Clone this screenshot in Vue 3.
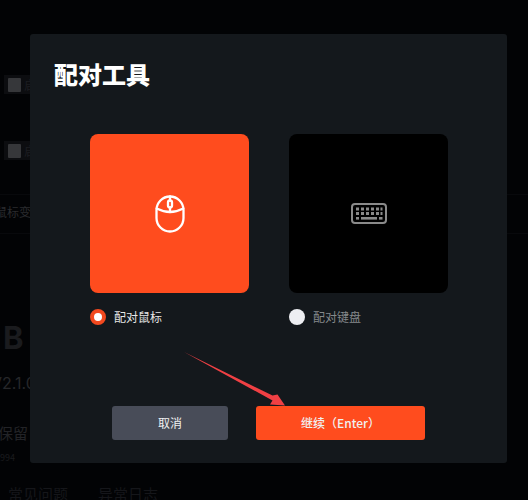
<script setup>
const rows = [{ id: 1 }, { id: 2 }]
</script>

<template>
  <div class="page">
    <div class="backdrop">
      <div class="checks">
        <div v-for="r in rows" :key="r.id" class="check"><span class="box"></span><span>启用</span></div>
      </div>
      <div class="mouse-row">鼠标变速</div>
      <div class="brand">B</div>
      <div class="version">V2.1.0</div>
      <div class="rule"></div>
      <div class="keep">保留</div>
      <div class="serial">994</div>
      <div class="links"><span>常见问题</span><span>异常日志</span></div>
    </div>

    <section class="dialog">
      <h1>配对工具</h1>
      <div class="options">
        <div class="option">
          <div class="tile tile-on">
            <svg class="mouse" width="30" height="38" viewBox="0 0 30 38" fill="none" stroke="#fff" stroke-width="2.3" stroke-linecap="round" stroke-linejoin="round">
              <rect x="1.5" y="1.5" width="27" height="35" rx="13.5" />
              <path d="M1.7 13.5C7 16.2 10.5 17 15 17S23 16.2 28.300 13.5" />
              <path d="M15 1.500V5.500M15 12.500V17" />
              <rect x="13" y="5.500" width="4" height="7" rx="2" />
            </svg>
          </div>
          <label class="choice choice-on"><span class="radio radio-on"></span>配对鼠标</label>
        </div>
        <div class="option">
          <div class="tile tile-off">
            <svg class="keys" width="36" height="21" viewBox="0 0 36 21" fill="none">
              <rect x="1" y="1" width="34" height="19" rx="3" stroke="#8a8a8a" stroke-width="2" />
              <g fill="#8a8a8a">
                <rect x="5" y="4.500" width="3" height="3" /><rect x="10" y="4.500" width="3" height="3" /><rect x="15" y="4.500" width="3" height="3" /><rect x="20" y="4.500" width="3" height="3" /><rect x="25" y="4.500" width="3" height="3" /><rect x="29.500" y="4.500" width="2" height="3" />
                <rect x="5" y="9" width="3" height="3" /><rect x="10" y="9" width="3" height="3" /><rect x="15" y="9" width="3" height="3" /><rect x="20" y="9" width="3" height="3" /><rect x="25" y="9" width="3" height="3" /><rect x="29.500" y="9" width="2" height="3" />
                <rect x="5" y="14" width="3" height="2.600" /><rect x="10" y="14" width="16" height="2.600" /><rect x="28" y="14" width="3.500" height="2.600" />
              </g>
            </svg>
          </div>
          <label class="choice choice-off"><span class="radio radio-off"></span>配对键盘</label>
        </div>
      </div>
      <div class="actions">
        <button class="btn btn-cancel">取消</button>
        <button class="btn btn-go">继续（Enter）</button>
      </div>
    </section>

    <svg class="arrow" width="528" height="500" viewBox="0 0 528 500">
      <path d="M184 352L272.500 395.500L277.500 394.500L285 405.500L270 404.500L272.500 400.500Z" fill="#f04044" />
    </svg>
  </div>
</template>

<style>
html, body { margin: 0; background: #020305; }
</style>

<style scoped>
.page {
  position: relative;
  width: 528px;
  height: 500px;
  overflow: hidden;
  background: #020305;
  font-family: "Noto Sans CJK SC", "Noto Sans", sans-serif;
}
.backdrop {
  display: flex;
  flex-direction: column;
  color: #1b1c1f;
  height: 100%;
  box-sizing: border-box;
  padding-top: 75px;
  white-space: nowrap;
}
.checks { display: flex; flex-direction: column; gap: 47px; padding-left: 4px; }
.check {
  display: flex;
  align-items: center;
  gap: 3px;
  width: 60px;
  height: 19px;
  padding-left: 4px;
  background: #0c0d10;
  font-size: 12px;
  color: #1c1d21;
  line-height: 19px;
}
.box { width: 13px; height: 14px; background: #36373a; border-radius: 1px; }
.mouse-row {
  margin: 34px 0 0;
  padding: 7px 0 11px;
  font-size: 12px;
  line-height: 20px;
  color: #2a2b2e;
  text-indent: -5px;
  border-top: 1px solid #08090c;
  border-bottom: 1px solid #08090c;
}
.brand { margin: 87px 0 0 3px; font-size: 31px; line-height: 34px; font-weight: 700; font-family: "Inter", sans-serif; color: #1a1b1e; }
.version { margin: 18px 0 0 -9px; font-size: 16px; line-height: 20px; color: #26272a; font-family: "Inter", sans-serif; }
.rule { margin: 18px 0 0; width: 30px; height: 1px; background: #15161a; }
.keep { margin: 11px 0 0 -2px; font-size: 15px; line-height: 22px; color: #222327; }
.serial { margin: 8px 0 0; font-size: 9px; line-height: 12px; color: #1a1b1e; }
.links { display: flex; gap: 30px; margin: 20px 0 0 8px; font-size: 15px; line-height: 20px; color: #15161a; }

.dialog {
  position: absolute;
  left: 30px;
  top: 34px;
  width: 477px;
  height: 429px;
  box-sizing: border-box;
  padding: 24px 24px 0;
  background: #14181c;
  border-radius: 3px;
  display: flex;
  flex-direction: column;
}
h1 {
  margin: 0;
  font-size: 24px;
  line-height: 32px;
  font-weight: 900;
  color: #fff;
}
.options { display: flex; gap: 40px; margin: 44px 0 0 36px; }
.option { display: flex; flex-direction: column; width: 159px; }
.tile {
  height: 159px;
  border-radius: 8px;
  display: flex;
  align-items: center;
  justify-content: center;
}
.tile-on { background: #ff4c1e; }
.tile-off { background: #000; }
.choice {
  display: flex;
  align-items: center;
  gap: 8px;
  margin-top: 15px;
  height: 18px;
  font-size: 12px;
  line-height: 18px;
}
.choice-on { color: #e6e6e6; }
.choice-off { color: #85888b; }
.radio { width: 16px; height: 16px; border-radius: 50%; box-sizing: border-box; flex: none; }
.radio-on { background: #fff; border: 4px solid #f2491f; }
.radio-off { background: #edeef2; }
.actions { display: flex; gap: 28px; margin: 80px 0 0 58px; }
.btn {
  height: 34px;
  border: 0;
  padding: 0;
  border-radius: 3px;
  font-family: inherit;
  font-size: 12px;
  line-height: 34px;
  color: #f0f0f0;
}
.btn-cancel { width: 116px; background: #484c58; }
.btn-go { width: 169px; background: #ff4c1e; font-weight: 500; }
.arrow { position: absolute; left: 0; top: 0; pointer-events: none; }
</style>
